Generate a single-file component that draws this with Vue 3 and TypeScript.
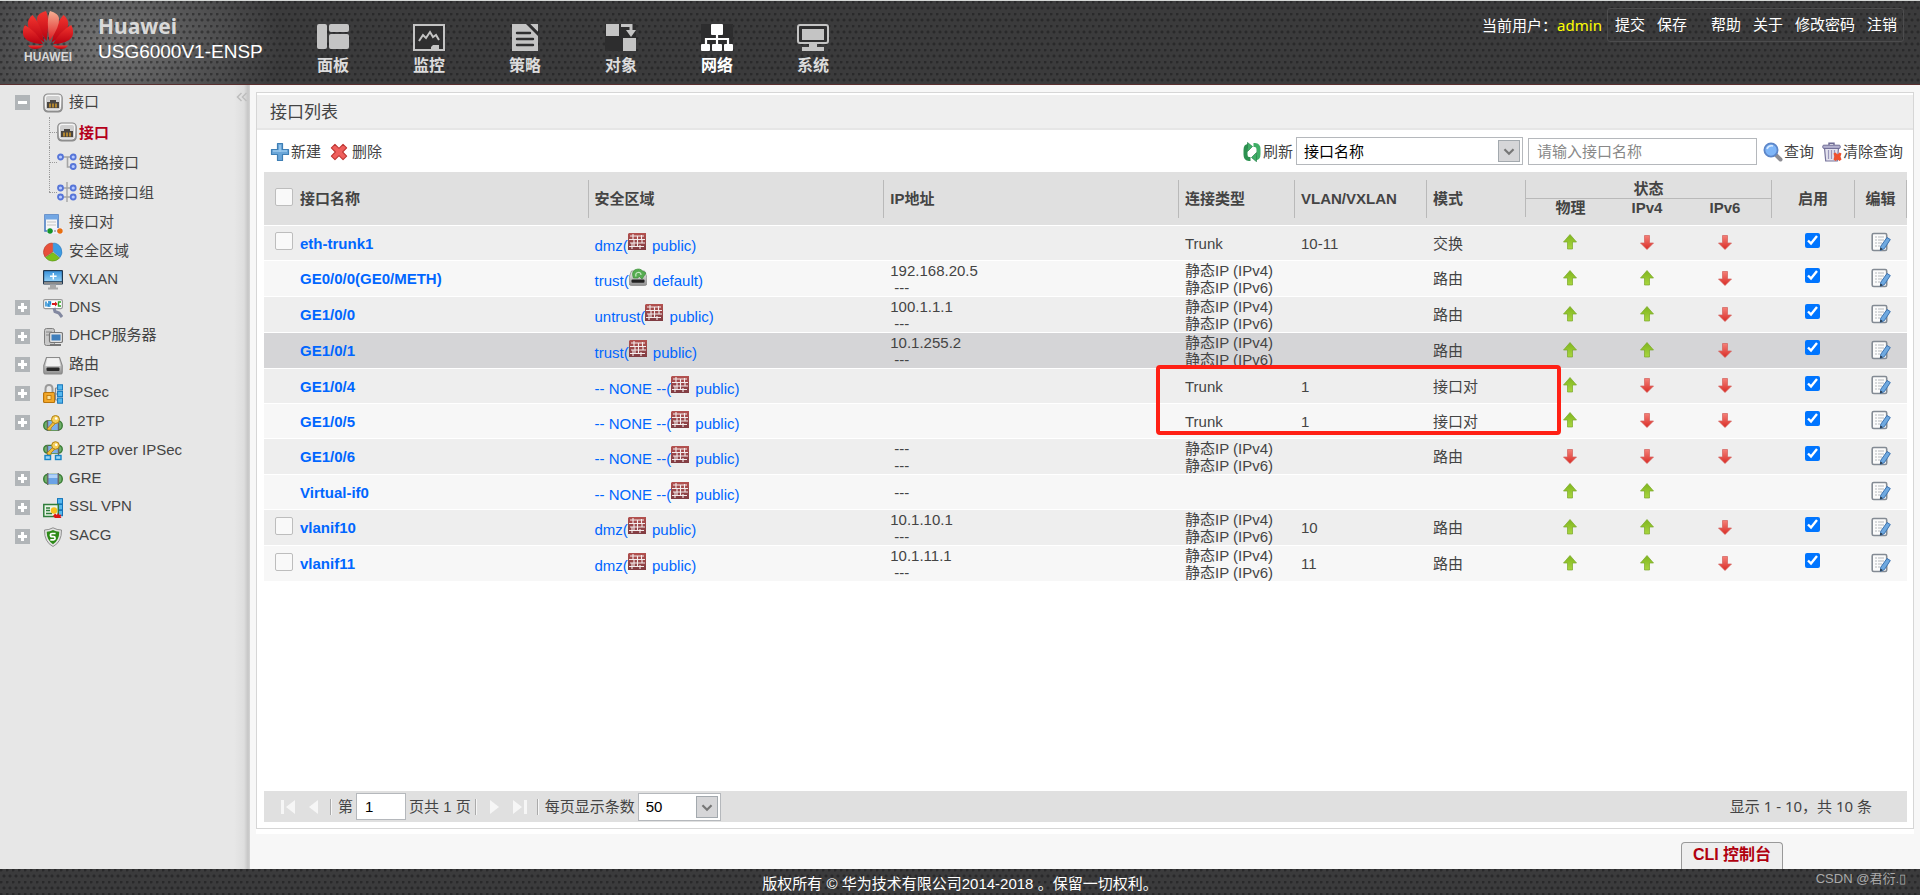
<script setup lang="ts">
import { ref } from 'vue'

type Arrow = 'up' | 'down' | ''

interface Tab { id: string; label: string; active?: boolean }
interface TreeItem { icon: string; label: string; expandable?: boolean }
interface Row {
  name: string
  selectable?: boolean
  zone: string
  vsys: string
  ip: string[]
  type: string[]
  vlan: string
  mode: string
  state: Arrow[]
  enabled: boolean | null
  current?: boolean
  marked?: boolean
}

const tabs: Tab[] = [
  { id: 'panel', label: '面板' },
  { id: 'monitor', label: '监控' },
  { id: 'policy', label: '策略' },
  { id: 'object', label: '对象' },
  { id: 'network', label: '网络', active: true },
  { id: 'system', label: '系统' },
]

const children: TreeItem[] = [
  { icon: 'port', label: '接口' },
  { icon: 'link', label: '链路接口' },
  { icon: 'linkgroup', label: '链路接口组' },
]

const tree: TreeItem[] = [
  { icon: 'pair', label: '接口对' },
  { icon: 'zone', label: '安全区域' },
  { icon: 'vxlan', label: 'VXLAN' },
  { icon: 'dns', label: 'DNS', expandable: true },
  { icon: 'dhcp', label: 'DHCP服务器', expandable: true },
  { icon: 'route', label: '路由', expandable: true },
  { icon: 'ipsec', label: 'IPSec', expandable: true },
  { icon: 'l2tp', label: 'L2TP', expandable: true },
  { icon: 'l2tpip', label: 'L2TP over IPSec' },
  { icon: 'gre', label: 'GRE', expandable: true },
  { icon: 'ssl', label: 'SSL VPN', expandable: true },
  { icon: 'sacg', label: 'SACG', expandable: true },
]

const dual = ['静态IP (IPv4)', '静态IP (IPv6)']
const none = '---'

const rows = ref<Row[]>([
  { name: 'eth-trunk1', selectable: true, zone: 'dmz', vsys: 'public', ip: [], type: ['Trunk'], vlan: '10-11', mode: '交换', state: ['up', 'down', 'down'], enabled: true },
  { name: 'GE0/0/0(GE0/METH)', zone: 'trust', vsys: 'default', ip: ['192.168.20.5', none], type: dual, vlan: '', mode: '路由', state: ['up', 'up', 'down'], enabled: true },
  { name: 'GE1/0/0', zone: 'untrust', vsys: 'public', ip: ['100.1.1.1', none], type: dual, vlan: '', mode: '路由', state: ['up', 'up', 'down'], enabled: true },
  { name: 'GE1/0/1', zone: 'trust', vsys: 'public', ip: ['10.1.255.2', none], type: dual, vlan: '', mode: '路由', state: ['up', 'up', 'down'], enabled: true, current: true },
  { name: 'GE1/0/4', zone: '-- NONE --', vsys: 'public', ip: [], type: ['Trunk'], vlan: '1', mode: '接口对', state: ['up', 'down', 'down'], enabled: true, marked: true },
  { name: 'GE1/0/5', zone: '-- NONE --', vsys: 'public', ip: [], type: ['Trunk'], vlan: '1', mode: '接口对', state: ['up', 'down', 'down'], enabled: true },
  { name: 'GE1/0/6', zone: '-- NONE --', vsys: 'public', ip: [none, none], type: dual, vlan: '', mode: '路由', state: ['down', 'down', 'down'], enabled: true },
  { name: 'Virtual-if0', zone: '-- NONE --', vsys: 'public', ip: [none], type: [], vlan: '', mode: '', state: ['up', 'up', ''], enabled: null },
  { name: 'vlanif10', selectable: true, zone: 'dmz', vsys: 'public', ip: ['10.1.10.1', none], type: dual, vlan: '10', mode: '路由', state: ['up', 'up', 'down'], enabled: true },
  { name: 'vlanif11', selectable: true, zone: 'dmz', vsys: 'public', ip: ['10.1.11.1', none], type: dual, vlan: '11', mode: '路由', state: ['up', 'up', 'down'], enabled: true },
])

const keyword = ref('')
const page = ref('1')
</script>

<template>
  <div class="app">
    <svg class="defs" aria-hidden="true">
      <defs>
        <linearGradient id="g-red" x1="0" y1="0" x2="0" y2="1"><stop offset="0" stop-color="#f2352f" /><stop offset="1" stop-color="#b80010" /></linearGradient>
        <linearGradient id="g-hot" x1="0" y1="0" x2="0" y2="1"><stop offset="0" stop-color="#f7b093" /><stop offset="1" stop-color="#dc1a20" /></linearGradient>
        <linearGradient id="g-grey" x1="0" y1="0" x2="0" y2="1"><stop offset="0" stop-color="#f4f4f4" /><stop offset="1" stop-color="#8f8f8f" /></linearGradient>
        <linearGradient id="g-blue" x1="0" y1="0" x2="0" y2="1"><stop offset="0" stop-color="#3b93dc" /><stop offset="1" stop-color="#8fd0f8" /></linearGradient>
        <linearGradient id="g-up" x1="0" y1="0" x2="0" y2="1"><stop offset="0" stop-color="#7fb51f" /><stop offset="1" stop-color="#a9d63f" /></linearGradient>
        <linearGradient id="g-down" x1="0" y1="0" x2="0" y2="1"><stop offset="0" stop-color="#f58078" /><stop offset="1" stop-color="#d92c26" /></linearGradient>
        <linearGradient id="g-wall" x1="0" y1="0" x2="0" y2="1"><stop offset="0" stop-color="#b4514f" /><stop offset="1" stop-color="#7f3c42" /></linearGradient>
      </defs>

      <symbol id="t-panel" viewBox="0 0 32 27"><rect x="0" y="0" width="10" height="25" rx="2" /><rect x="12" y="0" width="20" height="8" rx="2" /><rect x="12" y="10" width="20" height="15" rx="2" /></symbol>
      <symbol id="t-monitor" viewBox="0 0 32 27"><rect x="1" y="1" width="30" height="25" fill="#2f2f30" stroke="currentColor" stroke-width="2" /><path d="M6 17l4-6 3 3 4-6 3 5 3-2 3 5" fill="none" stroke="currentColor" stroke-width="2" /><path d="M18 26v-3l2-2h6v5z" /></symbol>
      <symbol id="t-policy" viewBox="0 0 32 27"><path d="M3 0h16l10 10v17H3z" /><path d="M21 0h8v8z" /><path d="M17 0h4l8 8v4z" fill="#2f2f30" /><path d="M8 9h13M8 15h16M8 21h16" stroke="#2f2f30" stroke-width="2.4" stroke-linecap="round" /></symbol>
      <symbol id="t-object" viewBox="0 0 32 27"><rect width="31" height="27" fill="#2d2d2e" /><rect x="1" y="0" width="13" height="12" /><rect x="18" y="14" width="13" height="13" /><path d="M16 1.500h10v5" fill="none" stroke="currentColor" stroke-width="3" /><path d="M21 6h10l-5 7z" /></symbol>
      <symbol id="t-network" viewBox="0 0 32 27"><rect width="32" height="27" fill="#2d2d2e" /><rect x="10" y="0" width="12" height="11" rx="1" /><path d="M16 10v11M5 21v-6h22v6" fill="none" stroke="currentColor" stroke-width="2.200" /><rect x="0" y="20" width="9" height="7" rx="1" /><rect x="11" y="20" width="10" height="7" rx="1" /><rect x="23" y="20" width="9" height="7" rx="1" /></symbol>
      <symbol id="t-system" viewBox="0 0 32 27"><rect x="1" y="1" width="30" height="18" rx="2" fill="#2f2f30" stroke="currentColor" stroke-width="2" /><rect x="5" y="5" width="22" height="11" /><path d="M12 20h8v3h7v4H5v-4h7z" /></symbol>

      <symbol id="i-port" viewBox="0 0 20 20"><rect x=".8" y="1" width="18.400" height="18" rx="4" fill="url(#g-grey)" stroke="#8a8a8a" stroke-width="1.200" /><rect x="2.500" y="2.500" width="15" height="14.500" rx="2.500" fill="#cfcfcf" stroke="#f7f7f7" /><path d="M4 15V9h3V7h6v2h3v6z" fill="#4a4642" /><path d="M7 10.500v4M10 10.500v4M13 10.500v4" stroke="#dca12b" stroke-width="1.400" /></symbol>
      <symbol id="i-link" viewBox="0 0 20 20"><path d="M5 5h10M10.500 5v10h3" fill="none" stroke="#a5a5a5" stroke-width="1.600" /><g fill="#b9cbff" stroke="#5675d8" stroke-width="1.800"><circle cx="3.500" cy="5" r="2.500" /><circle cx="16.200" cy="5" r="2.500" /><circle cx="16.200" cy="14.500" r="2.500" /></g></symbol>
      <symbol id="i-linkgroup" viewBox="0 0 20 20"><path d="M5 6h10M5 15h10M10 0v20" fill="none" stroke="#a5a5a5" stroke-width="1.400" /><g fill="#b9cbff" stroke="#5675d8" stroke-width="1.800"><circle cx="3.500" cy="6" r="2.500" /><circle cx="16.200" cy="6" r="2.500" /><circle cx="3.500" cy="15" r="2.500" /><circle cx="16.200" cy="15" r="2.500" /></g></symbol>
      <symbol id="i-pair" viewBox="0 0 20 20"><rect x="2" y="1" width="13" height="16" fill="#f6f6f6" stroke="#4e7fc4" stroke-width="1.600" /><rect x="2" y="1" width="13" height="4.500" fill="#73a7e4" /><path d="M4 8h9M4 11h9" stroke="#c4c4c4" /><rect x="4" y="14" width="16" height="6" fill="#eef" /><path d="M8 17h7" stroke="#777" stroke-dasharray="2 1" /><circle cx="7" cy="17" r="2.700" fill="#149628" /><circle cx="17" cy="17" r="2.700" fill="#e8700f" /></symbol>
      <symbol id="i-zone" viewBox="0 0 20 20"><path d="M9.500 10V1A9 9 0 0 0 2 15z" fill="#e8503a" stroke="#b23b2a" stroke-width=".6" /><path d="M10.500 9.500V1A9 9 0 0 1 17 15.500z" fill="#3d9ce3" stroke="#2c73b8" stroke-width=".6" /><path d="M10 10.500L2.500 15.500A9 9 0 0 0 16.500 16z" fill="#7cc01c" stroke="#528f10" stroke-width=".6" /></symbol>
      <symbol id="i-vxlan" viewBox="0 0 20 20"><rect x="0" y="0" width="20" height="14.500" rx="1" fill="#20374f" /><rect x="1.200" y="1.200" width="17.600" height="10" fill="url(#g-blue)" /><path d="M10.300 3v6.500M7 6.200h6.600" stroke="#fff" stroke-width="1.400" /><path d="M1 13h18" stroke="#8b8b8b" stroke-width="2" /><path d="M7 14.500h6v3h2v2H5v-2h2z" fill="#a9a9a9" /></symbol>
      <symbol id="i-dns" viewBox="0 0 20 20"><rect x=".6" y="1.600" width="18.800" height="9" rx="1.500" fill="#fff" stroke="#999" stroke-width="1.200" /><path d="M3 3.500v5M5 4h2.500v2H5v2h2.500" stroke="#1583cf" stroke-width="1.400" fill="none" /><path d="M9 6h4" stroke="#d61b1b" stroke-width="2" /><path d="M12 3.500l2.700 2.500L12 8.500z" fill="#d61b1b" /><path d="M18 4h-2.500v4H18" stroke="#2ea324" stroke-width="1.400" fill="none" /><path d="M11 10l1 3.500 4 1.500 3 4" stroke="#8288a0" stroke-width="3" fill="none" /></symbol>
      <symbol id="i-dhcp" viewBox="0 0 20 20"><rect x="1.500" y="1.500" width="10" height="17" rx="2" fill="#c9c9c9" stroke="#808080" /><path d="M3 5h6M3 8h5" stroke="#888" /><rect x="6.500" y="5.500" width="13" height="10" rx="1.500" fill="#e2e2e2" stroke="#777" stroke-width="1.200" /><rect x="8.500" y="7.500" width="9" height="6" fill="#3f7ebb" /><path d="M7 18h11" stroke="#777" stroke-width="2" /></symbol>
      <symbol id="i-route" viewBox="0 0 20 20"><path d="M3.500 2.500h13l2.700 8v6.500q0 2-2 2H2.800q-2 0-2-2v-6.500z" fill="url(#g-grey)" stroke="#8a8a8a" stroke-width="1.200" /><path d="M4.500 4h11l2 7h-15z" fill="#f2f2f2" /><rect x="3.500" y="12.500" width="13" height="3.500" rx="1" fill="#2b2b2b" /></symbol>
      <symbol id="i-ipsec" viewBox="0 0 20 20"><path d="M2.500 9V5q0-4 3.500-4t3.500 4v4" fill="none" stroke="#9a9a9a" stroke-width="2" /><rect x=".6" y="8.500" width="11" height="10" rx="1" fill="#f3a728" stroke="#b8740c" stroke-width="1.200" /><rect x="4" y="11.500" width="4" height="4" fill="#fce29b" stroke="#b8740c" stroke-width=".8" /><path d="M11 10h4M12.500 4v12M12.500 4H15M12.500 16H15" stroke="#888" stroke-width="1.200" fill="none" /><g fill="#56b8ef" stroke="#1374ba"><rect x="14.600" y=".8" width="5" height="5.200" /><rect x="14.600" y="7.400" width="5" height="5.200" /><rect x="14.600" y="14" width="5" height="5.200" /></g></symbol>
      <symbol id="i-l2tp" viewBox="0 0 20 20"><rect x=".8" y="8" width="18.400" height="9" rx="4" fill="#6fb06a" stroke="#3b7d36" stroke-width="1.400" /><rect x="5" y="8" width="10" height="9" fill="#7eafe9" /><path d="M4.500 7v11M15.500 7v11" stroke="#666" stroke-width="1.400" /><path d="M4 16l7-8 2 2-5 5v2H5z" fill="#efbd3b" stroke="#a97708" stroke-width=".7" /><circle cx="12.500" cy="6.500" r="4" fill="#f5cf5b" stroke="#b07f12" /><circle cx="13.200" cy="5.500" r="1.300" fill="#fff" /></symbol>
      <symbol id="i-l2tpip" viewBox="0 0 20 20"><rect x=".8" y="4.500" width="18.400" height="7.500" rx="3.500" fill="#6fb06a" stroke="#3b7d36" stroke-width="1.400" /><rect x="5" y="5" width="10" height="7" fill="#7eafe9" /><path d="M4.500 4v12M15.500 4v12" stroke="#666" stroke-width="1.400" /><path d="M4 12l7-7 2 2-5 5v2H5z" fill="#efbd3b" stroke="#a97708" stroke-width=".7" /><circle cx="12.500" cy="4.500" r="3.800" fill="#f5cf5b" stroke="#b07f12" /><circle cx="13.200" cy="3.700" r="1.200" fill="#fff" /><g fill="#9ad6f7" stroke="#1785c7" stroke-width="1.400"><rect x="2" y="14.500" width="5.500" height="4" /><rect x="12.500" y="14.500" width="5.500" height="4" /></g></symbol>
      <symbol id="i-gre" viewBox="0 0 20 20"><rect x=".8" y="5.500" width="18.400" height="9" rx="4" fill="#6fb06a" stroke="#3b7d36" stroke-width="1.500" /><rect x="5" y="5" width="10" height="10" fill="#6ba3e6" /><rect x="5" y="5.500" width="10" height="3.500" fill="#b1d2f8" /><path d="M4.700 4v12M15.300 4v12" stroke="#6a6a6a" stroke-width="1.500" /></symbol>
      <symbol id="i-ssl" viewBox="0 0 20 20"><g fill="#56b8ef" stroke="#1374ba"><rect x="14.500" y=".6" width="5" height="5.200" /><rect x="14.500" y="6.500" width="5" height="5.200" /><rect x="14.500" y="12.500" width="5" height="5.200" /></g><rect x=".8" y="6.500" width="14.500" height="12" fill="#eaf5e8" stroke="#2f7d3a" stroke-width="1.500" /><path d="M3 10h4M3 12.500h4M3 15.500h6" stroke="#2f7d3a" stroke-width="1.300" /><circle cx="11" cy="12.500" r="3.200" fill="#f6c21e" /><path d="M10 18l2-2.500 2 1.500 1-2 1.500 2 2-.5-1 2 1 1.500-6 .5z" fill="#dd1515" /></symbol>
      <symbol id="i-sacg" viewBox="0 0 20 20"><path d="M10 .8Q14 3 18.500 3q.3 12-8.500 16.500Q1.200 15 1.500 3 6 3 10 .8z" fill="#e3e3e3" stroke="#8f8f8f" /><path d="M10 3q3 1.600 6.300 1.700Q16.300 13 10 17.300 3.700 13 3.700 4.700 7 4.600 10 3z" fill="#2c8a17" /><path d="M12.600 6.500H9q-1.600 0-1.600 1.600T9 9.700h1.500q1.600 0 1.600 1.600t-1.600 1.600H7.300" fill="none" stroke="#fff" stroke-width="1.700" /></symbol>

      <symbol id="i-add" viewBox="0 0 20 20"><path d="M7.500 1.500h5v6h6v5h-6v6h-5v-6h-6v-5h6z" fill="#6aa6d8" stroke="#3f7fb5" stroke-width="1.200" stroke-linejoin="round" /><path d="M10 3v7M3 9h14" stroke="#9ccaee" stroke-width="1.600" /></symbol>
      <symbol id="i-del" viewBox="0 0 20 20"><path d="M5.500 1.500L10 6l4.500-4.500 4 4L14 10l4.500 4.500-4 4L10 14l-4.500 4.500-4-4L6 10 1.500 5.500z" fill="#ef5f5c" stroke="#bf3734" stroke-width="1.200" stroke-linejoin="round" /></symbol>
      <symbol id="i-refresh" viewBox="0 0 18 20"><path d="M7.500 17H6Q2.500 17 2.500 12.500V8Q2.500 4 5 4" fill="none" stroke="#2c9150" stroke-width="4" /><path d="M4.500 .5l5 4-5 5z" fill="#3fae66" stroke="#26814a" stroke-width=".7" /><path d="M10.500 3H12q3.500 0 3.500 4.500V12q0 4-2.500 4" fill="none" stroke="#3fae66" stroke-width="4" /><path d="M13.500 10.500v9.200l-5-4.200z" fill="#3fae66" stroke="#26814a" stroke-width=".7" /></symbol>
      <symbol id="i-search" viewBox="0 0 20 20"><path d="M12 12l5.500 5.500" stroke="#8d8d93" stroke-width="4" stroke-linecap="round" /><circle cx="8" cy="8" r="6.600" fill="#7fb6f8" stroke="#5d86c8" stroke-width="1.800" /><path d="M4 7q1.500-4 6-3" stroke="#d7eaff" stroke-width="1.600" fill="none" /></symbol>
      <symbol id="i-trash" viewBox="0 0 20 20"><path d="M7 3V1.300h5V3" fill="none" stroke="#6d6a94" stroke-width="1.400" /><path d="M2.500 6h14l-1.200 13H3.700z" fill="#e4e3ee" stroke="#77749c" stroke-width="1.200" /><path d="M6.500 8v9M9.500 8v9M12.500 8v9" stroke="#9a97bb" stroke-width="1.200" /><rect x=".8" y="3.200" width="17.400" height="3.200" rx="1" fill="#b3b1cf" stroke="#6d6a94" /><path d="M11.500 11.500l2-1 2 2 2-2 2 1-1 3 1 3-2 1.500-2-1.500-2 1.500-2-1.500 1-3z" fill="#f0512d" /></symbol>

      <symbol id="i-public" viewBox="0 0 18 18"><path d="M1 0h17v17H0V1z" fill="url(#g-wall)" /><path d="M2 3h14M1 6.500h16M2 10h15M1 13.500h15M5 1v5M9.500 3v11M13.500 2v5M6 7v6M14 7v3M4 10v6M12 12v4" stroke="#f4eded" stroke-width="1.100" /></symbol>
      <symbol id="i-default" viewBox="0 0 18 18"><path d="M2.500 3h13l2.300 6v6.500q0 2-2 2H2.200q-2 0-2-2V9z" fill="url(#g-grey)" stroke="#8a8a8a" stroke-width=".8" /><rect x="2.500" y="11.500" width="13" height="3.300" rx="1" fill="#222" /><path d="M4.500 10Q2 4 6 1.800q5-2 7.500 1.200L17 5l-4 6-3-3-1 2z" fill="#57ad52" stroke="#3c9238" stroke-width=".7" /><path d="M7 8.500Q6 5 9 4.500t3 2.500" fill="none" stroke="#c9e8c6" stroke-width="1.200" /></symbol>
      <symbol id="i-up" viewBox="0 0 16 18"><path d="M8 1.500l6.500 7.500H10.500v7h-5V9H1.500z" fill="url(#g-up)" stroke="#7aa828" stroke-width=".7" /></symbol>
      <symbol id="i-down" viewBox="0 0 16 18"><path d="M8 16.500L1.500 10h4V2.500h5V10h4z" fill="url(#g-down)" stroke="#d2605b" stroke-width=".7" /></symbol>
      <symbol id="i-edit" viewBox="0 0 20 20"><rect x="1.200" y="1.500" width="14.500" height="17" rx="1.500" fill="#fbfbfb" stroke="#848b94" stroke-width="1.600" /><path d="M4 5h2M7 5h6M4 8h2M7 8h6M4 11h2M7 11h4M4 14h2M7 14h2" stroke="#b5b9be" stroke-width="1.200" /><path d="M16 5.500l3.300 2-6 9.200-4 1.600.5-4.100z" fill="#6fa9e0" stroke="#3a72b0" /><path d="M9.300 18.300l.3-2.500 2 1.300z" fill="#222" /></symbol>

      <symbol id="p-first" viewBox="0 0 16 16"><path d="M1 1h3v14H1zM15 1v14L6 8z" /></symbol>
      <symbol id="p-prev" viewBox="0 0 16 16"><path d="M13 1v14L4 8z" /></symbol>
      <symbol id="p-next" viewBox="0 0 16 16"><path d="M3 1v14l9-7z" /></symbol>
      <symbol id="p-last" viewBox="0 0 16 16"><path d="M12 1h3v14h-3zM1 1v14l9-7z" /></symbol>
    </svg>

    <header class="top metal">
      <div class="brand">
        <div class="logo">
          <svg class="petals" viewBox="0 0 50 38" aria-hidden="true">
            <g fill="url(#g-red)">
              <path d="M23.500 30Q13 16 14 7q1-5 9-7 4 8 .5 30z" />
              <path d="M21.500 31.500Q7 23 5 15 4 8 9.500 4 17 11 21.500 31.500z" />
              <path d="M20 33Q5 32.500 1 26q-2.500-6 .8-12Q13 20 20 33z" />
              <path d="M20.500 34.500H5q2.500 3.500 7 3.500 5 0 8.500-3.500z" />
              <path d="M28.500 31.500Q43 23 45 15 46 8 40.500 4 33 11 28.500 31.500z" />
              <path d="M30 33Q45 32.500 49 26q2.500-6-.8-12Q37 20 30 33z" />
              <path d="M29.500 34.500H45q-2.500 3.500-7 3.500-5 0-8.500-3.500z" />
            </g>
            <path d="M26.500 30Q37 16 36 7q-1-5-9-7-4 8-.5 30z" fill="url(#g-hot)" />
          </svg>
          <span class="logo-text">HUAWEI</span>
        </div>
        <div class="product">
          <strong>Huawei</strong>
          <span>USG6000V1-ENSP</span>
        </div>
      </div>
      <nav class="tabs">
        <a v-for="t in tabs" :key="t.id" href="#" :class="{ active: t.active }">
          <svg aria-hidden="true"><use :href="'#t-' + t.id" /></svg>
          <span>{{ t.label }}</span>
        </a>
      </nav>
      <div class="user">
        <span>当前用户：<b>admin</b></span>
        <div class="links">
          <a href="#">提交</a><a href="#">保存</a><a class="apart" href="#">帮助</a><a href="#">关于</a><a href="#">修改密码</a><a href="#">注销</a>
        </div>
      </div>
    </header>

    <div class="body">
      <aside class="side">
        <button class="collapse" type="button" aria-label="收起">
          <svg viewBox="0 0 12 10"><path d="M5.500 1L1.500 5l4 4M10.500 1l-4 4 4 4" /></svg>
        </button>
        <ul class="tree">
          <li class="node root">
            <button class="toggle minus" type="button" aria-label="折叠" />
            <svg class="ico" aria-hidden="true"><use href="#i-port" /></svg>
            <a href="#">接口</a>
          </li>
          <li>
            <ul class="sub">
              <li v-for="(c, i) in children" :key="c.label" :class="{ on: i === 0 }">
                <svg class="ico" aria-hidden="true"><use :href="'#i-' + c.icon" /></svg>
                <a href="#">{{ c.label }}</a>
              </li>
            </ul>
          </li>
          <li v-for="n in tree" :key="n.label" class="node" :class="'n-' + n.icon">
            <button v-if="n.expandable" class="toggle" type="button" aria-label="展开" />
            <span v-else class="blank" />
            <svg class="ico" aria-hidden="true"><use :href="'#i-' + n.icon" /></svg>
            <a href="#">{{ n.label }}</a>
          </li>
        </ul>
      </aside>

      <main class="main">
        <section class="panel">
          <h1>接口列表</h1>
          <div class="toolbar">
            <button type="button" class="tool"><svg class="ico" aria-hidden="true"><use href="#i-add" /></svg>新建</button>
            <button type="button" class="tool"><svg class="ico del" aria-hidden="true"><use href="#i-del" /></svg>删除</button>
            <span class="spring" />
            <button type="button" class="tool"><svg class="ico" aria-hidden="true"><use href="#i-refresh" /></svg>刷新</button>
            <span class="pick field">
              <select aria-label="查询条件"><option>接口名称</option></select>
              <svg class="arrow" viewBox="0 0 22 22" aria-hidden="true"><path d="M6 9l5 5 5-5" /></svg>
            </span>
            <input v-model="keyword" class="box keyword" type="text" aria-label="接口名称" placeholder="请输入接口名称" />
            <button type="button" class="tool"><svg class="ico" aria-hidden="true"><use href="#i-search" /></svg>查询</button>
            <button type="button" class="tool"><svg class="ico" aria-hidden="true"><use href="#i-trash" /></svg>清除查询</button>
          </div>

          <div class="grid">
            <table>
              <colgroup>
                <col class="c-check" /><col class="c-name" /><col class="c-zone" /><col /><col class="c-type" /><col class="c-vlan" /><col class="c-mode" />
                <col class="c-phy" /><col class="c-v4" /><col class="c-v6" /><col class="c-on" /><col class="c-edit" />
              </colgroup>
              <thead>
                <tr>
                  <th rowspan="2"><input class="tick" type="checkbox" aria-label="全选" /></th>
                  <th rowspan="2"><div class="h first">接口名称</div></th>
                  <th rowspan="2"><div class="h">安全区域</div></th>
                  <th rowspan="2"><div class="h">IP地址</div></th>
                  <th rowspan="2"><div class="h">连接类型</div></th>
                  <th rowspan="2"><div class="h">VLAN/VXLAN</div></th>
                  <th rowspan="2"><div class="h">模式</div></th>
                  <th colspan="3" class="upper"><div>状态</div></th>
                  <th rowspan="2"><div class="h mid">启用</div></th>
                  <th rowspan="2"><div class="h mid end">编辑</div></th>
                </tr>
                <tr>
                  <th class="lower"><div class="edge">物理</div></th>
                  <th class="lower"><div>IPv4</div></th>
                  <th class="lower"><div>IPv6</div></th>
                </tr>
              </thead>
              <tbody>
                <tr v-for="r in rows" :key="r.name" :class="{ tall: r.type.length > 1, current: r.current }">
                  <td class="pick-cell"><input v-if="r.selectable" class="tick" type="checkbox" :aria-label="r.name" /></td>
                  <td class="name"><a href="#">{{ r.name }}</a></td>
                  <td class="zone"><a href="#">{{ r.zone }}(<svg aria-hidden="true"><use :href="'#i-' + r.vsys" /></svg>&nbsp;{{ r.vsys }})</a></td>
                  <td class="ip"><div v-for="(l, i) in r.ip" :key="i" :class="{ dash: l === none }">{{ l }}</div></td>
                  <td class="type">
                    <div v-for="l in r.type" :key="l">{{ l }}</div>
                    <span v-if="r.marked" class="mark" />
                  </td>
                  <td>{{ r.vlan }}</td>
                  <td>{{ r.mode }}</td>
                  <td v-for="(s, i) in r.state" :key="i" class="state">
                    <svg v-if="s" role="img" :aria-label="s"><use :href="'#i-' + s" /></svg>
                  </td>
                  <td class="enable"><input v-if="r.enabled !== null" v-model="r.enabled" type="checkbox" :aria-label="'启用 ' + r.name" /></td>
                  <td class="edit"><button type="button" aria-label="编辑"><svg><use href="#i-edit" /></svg></button></td>
                </tr>
              </tbody>
            </table>
          </div>

          <div class="pager">
            <button type="button" aria-label="首页"><svg><use href="#p-first" /></svg></button>
            <button type="button" aria-label="上一页"><svg><use href="#p-prev" /></svg></button>
            <i />
            <label for="page">第</label>
            <input id="page" v-model="page" class="box page" type="text" />
            <span>页共 1 页</span>
            <i />
            <button type="button" aria-label="下一页"><svg><use href="#p-next" /></svg></button>
            <button type="button" aria-label="末页"><svg><use href="#p-last" /></svg></button>
            <i />
            <label for="size">每页显示条数</label>
            <span class="pick size">
              <select id="size"><option>50</option></select>
              <svg class="arrow" viewBox="0 0 22 22" aria-hidden="true"><path d="M6 9l5 5 5-5" /></svg>
            </span>
            <span class="total">显示 1 - 10，共 10 条</span>
          </div>
        </section>
        <div class="dock"><button type="button" class="cli">CLI 控制台</button></div>
      </main>
    </div>

    <footer class="foot metal">
      <span>版权所有 © 华为技术有限公司2014-2018 。保留一切权利。</span>
      <span class="credit">CSDN @君衍.▯</span>
    </footer>
  </div>
</template>

<style>
html, body { margin: 0; background: #f7f7f7; }
</style>

<style scoped>
.app {
  display: flex;
  flex-direction: column;
  min-height: 100vh;
  font: 15px/17px "Liberation Sans", "Noto Sans CJK SC", sans-serif;
  color: #444;
}
.defs { position: absolute; width: 0; height: 0; }
a { color: inherit; text-decoration: none; }
ul { list-style: none; margin: 0; padding: 0; }
button { border: 0; padding: 0; background: none; font: inherit; color: inherit; cursor: pointer; }
.ico { width: 20px; height: 20px; flex: none; }

.metal {
  background-color: #3b3b3c;
  background-image:
    radial-gradient(circle at 1px 1px, #29292a 1px, transparent 2px),
    radial-gradient(circle at 4px 7px, #29292a 1px, transparent 2px);
  background-size: 6px 12px;
}

.top {
  display: flex;
  align-items: flex-start;
  height: 85px;
  box-sizing: border-box;
  border-top: 1px solid #d5d8d6;
  border-bottom: 1px solid #5a3030;
  color: #fff;
  background-image:
    radial-gradient(circle at 1px 1px, rgba(25, 25, 26, 0.5) 1px, transparent 2px),
    radial-gradient(circle at 4px 7px, rgba(25, 25, 26, 0.5) 1px, transparent 2px),
    radial-gradient(ellipse 170px 120px at 112px 42px, #757575, #565657 50%, #3b3b3c);
  background-size: 6px 12px, 6px 12px, 100% 100%;
}
.brand { display: flex; width: 285px; }
.logo { width: 50px; margin: 10px 25px 0 23px; text-align: center; }
.petals { display: block; width: 50px; height: 38px; }
.logo-text { display: block; font: bold 12px/17px "Liberation Sans", sans-serif; color: #d8d8d8; }
.product { display: flex; flex-direction: column; margin-top: 12px; }
.product strong { font: bold 21px/26px "Noto Sans", sans-serif; color: #d9d9d9; }
.product span { font-size: 19px; line-height: 26px; }
.tabs { display: flex; }
.tabs a {
  display: flex;
  flex-direction: column;
  align-items: center;
  width: 96px;
  padding-top: 23px;
  color: #dcdcdc;
  font-weight: bold;
  font-size: 16px;
  line-height: 20px;
}
.tabs svg { width: 32px; height: 27px; margin-bottom: 5px; color: #c4c4c4; fill: currentColor; }
.tabs .active, .tabs .active svg { color: #fff; }
.user { display: flex; align-items: center; margin: 7px 16px 0 auto; line-height: 20px; }
.user b { font: 15px/20px "Noto Sans", sans-serif; color: #ff0; }
.links { display: flex; gap: 12px; margin-left: 5px; padding: 6px 6px 6px 7px; border: 1px solid #4c4c4d; border-radius: 3px; }
.links .apart { margin-left: 12px; }

.body { display: flex; flex: 1; background: #f7f7f7; }
.side {
  position: relative;
  flex: none;
  width: 250px;
  background: linear-gradient(to right, #e7e7e7 234px, #dedede 244px, #c6c6c6 248px, #d5d5d5);
}
.collapse { position: absolute; top: 1px; right: 1px; width: 14px; height: 20px; }
.collapse svg { width: 12px; height: 10px; fill: none; stroke: #bdbdbd; stroke-width: 1.5; }
.node { display: flex; align-items: center; height: 29px; padding-left: 15px; }
.node.root { height: 32px; }
.n-zone, .n-vxlan, .n-dns, .n-route, .n-l2tpip, .n-gre { height: 28px; }
.node .ico { margin: 4px 6px 0 13px; }
.blank { width: 15px; }
.toggle {
  width: 15px;
  height: 15px;
  margin-top: 3px;
  background:
    linear-gradient(#fff, #fff) center / 9px 3px no-repeat,
    linear-gradient(#fff, #fff) center / 3px 9px no-repeat,
    #b1b5b8;
}
.toggle.minus { background: linear-gradient(#fff, #fff) center / 9px 3px no-repeat, #b1b5b8; }
.sub { margin-left: 49px; }
.sub li { position: relative; display: flex; align-items: center; gap: 2px; height: 30px; padding-left: 8px; }
.sub li::before { content: ""; position: absolute; left: 0; top: 0; bottom: 0; border-left: 1px dotted #999; }
.sub li:last-child::before { bottom: 50%; }
.sub li::after { content: ""; position: absolute; left: 0; top: 50%; width: 8px; border-top: 1px dotted #999; }
.sub .on { color: #b5001b; font-weight: bold; }

.main { display: flex; flex-direction: column; flex: 1; min-width: 0; padding: 7px 6px 0; }
.panel {
  display: flex;
  flex-direction: column;
  flex: 1;
  border: 1px solid #d6d6d6;
  box-shadow: 0 5px 0 #fff;
  background: #fff;
}
h1 { margin: 2px 0 0; padding: 3px 13px 0; background: #efefef; border-bottom: 2px solid #e6e6e6; font-size: 17px; line-height: 30px; font-weight: normal; color: #444; }
.toolbar { display: flex; align-items: center; height: 42px; padding: 0 10px 0 13px; }
.tool { display: flex; align-items: center; gap: 1px; padding-top: 1px; white-space: nowrap; }
.tool + .tool { margin-left: 8px; }
.tool .del { width: 18px; height: 18px; margin: 0 3px 0 1px; }
.spring { flex: 1; }
.box { box-sizing: border-box; height: 27px; border: 1px solid #b5b8bc; background: #fff; font: inherit; color: #000; padding: 0 8px; }
.box::placeholder { color: #888; }
.keyword { width: 229px; margin: 0 6px 0 5px; }
.pick { position: relative; display: flex; }
.pick select { appearance: none; box-sizing: border-box; width: 100%; height: 28px; border: 1px solid #b5b8bc; border-radius: 0; background: #fff; font: inherit; color: #000; padding: 0 7px; }
.pick.field { width: 227px; margin-left: 3px; }
.pick.size { width: 83px; }
.arrow { position: absolute; top: 3px; right: 3px; width: 22px; height: 22px; box-sizing: border-box; border: 1px solid #a3a9ae; background: #d6d6d8; fill: none; stroke: #777; stroke-width: 2.4; pointer-events: none; }

.grid { flex: 1; padding: 0 6px 0 7px; }
table { width: 100%; table-layout: fixed; border-collapse: separate; border-spacing: 0; }
.c-check { width: 36px; }
.c-name { width: 17.5%; }
.c-zone { width: 18%; }
.c-type { width: 116px; }
.c-vlan { width: 132px; }
.c-mode { width: 99px; }
.c-phy { width: 90px; }
.c-v4 { width: 64px; }
.c-v6 { width: 92px; }
.c-on { width: 83px; }
.c-edit { width: 53px; }
th { box-sizing: border-box; height: 27px; padding: 0; background: #e0e0e0; text-align: left; border-bottom: 1px solid #fff; }
.h { height: 38px; line-height: 38px; padding-left: 6px; border-left: 1px solid #b9b9b9; }
.h.first { border: 0; padding: 0; }
.h.mid { padding: 0; text-align: center; }
.h.end { border-right: 1px solid #b9b9b9; }
.upper { border: 0; vertical-align: bottom; }
.upper div { height: 18px; line-height: 17px; border: 1px solid #b9b9b9; border-width: 0 0 1px 1px; text-align: center; }
.lower { vertical-align: top; text-align: center; }
.lower div { height: 18px; line-height: 18px; }
.edge { border-left: 1px solid #b9b9b9; }
.tick {
  appearance: none;
  display: block;
  box-sizing: border-box;
  width: 18px;
  height: 18px;
  margin: 0 0 4px 11px;
  border: 1px solid #bdbdbd;
  border-radius: 2px;
  background: #f9f9f9;
}
td { box-sizing: border-box; height: 35px; padding: 0 0 0 7px; background: #eee; border-bottom: 1px solid #fff; white-space: nowrap; }
.tall td { height: 36px; }
tr:nth-child(even) td { background: #f7f7f7; }
tr.current td { background: #d5d5d7; }
td.pick-cell, td.name { padding: 0; }
.name a { color: #06f; font-weight: bold; }
td.zone { padding-top: 2px; line-height: 20px; }
.zone a { color: #06f; }
.zone svg { width: 18px; height: 18px; margin-right: 2px; }
.ip .dash { padding-left: 4px; }
.type { position: relative; }
.mark {
  position: absolute;
  z-index: 1;
  top: -4px;
  left: -22px;
  box-sizing: border-box;
  width: 405px;
  height: 70px;
  border: 4px solid #ff2015;
  border-radius: 4px;
  pointer-events: none;
}
td.state, td.enable, td.edit { padding: 0; text-align: center; }
.state svg { display: block; width: 16px; height: 18px; margin: 0 auto 2px; }
.enable input { display: block; width: 15px; height: 15px; margin: 0 auto 6px; }
.edit button { display: block; margin: 0 auto 2px; }
.edit svg { display: block; width: 20px; height: 20px; }

.pager { display: flex; align-items: center; height: 31px; margin: 0 6px 6px 7px; padding: 0 35px 0 16px; background: #e0e0e0; }
.pager button { margin-right: 9px; }
.pager svg:not(.arrow) { display: block; width: 16px; height: 16px; fill: #f6f6f6; }
.pager i { width: 1px; height: 16px; margin-right: 6px; background: #aaa; border-right: 1px solid #f6f6f6; }
.pager span + i { margin: 0 10px 0 4px; }
.pager .page { width: 50px; margin: 0 3px; }
.pager .size { margin-left: 3px; }
.total { margin-left: auto; font-family: "Noto Sans", "Noto Sans CJK SC", sans-serif; }

.dock { display: flex; justify-content: flex-end; margin: 13px 131px 0 0; }
.cli { height: 27px; width: 102px; padding-bottom: 3px; border: 1px solid #999; border-bottom: 0; border-radius: 4px 4px 0 0; background: #eee; color: #b0000f; font-size: 16px; font-weight: bold; }

.foot { position: relative; display: flex; justify-content: center; height: 26px; line-height: 30px; color: #fff; }
.credit { position: absolute; right: 14px; top: 0; line-height: 19px; font-size: 13px; color: #aaa; }
</style>
